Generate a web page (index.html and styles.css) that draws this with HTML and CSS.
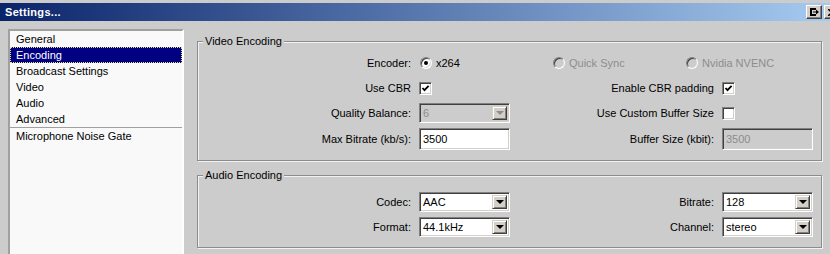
FILE: index.html
```html
<!DOCTYPE html>
<html lang="en">
<head>
  <meta charset="UTF-8" />
  <title>Settings...</title>
  <link rel="stylesheet" href="styles.css">
</head>
<body>
  <div class="window">
    <div class="titlebar">
      <span class="title">Settings...</span>
      <div class="tb-buttons">
        <span class="tb-btn">
          <svg width="9" height="8" viewBox="0 0 9 8">
            <path d="M0 0H6V2H2V6H6V8H0Z" fill="#000"/>
            <path d="M3 3.5H6V1.5L9 4L6 6.5V4.5H3Z" fill="#000"/>
          </svg>
        </span>
        <span class="tb-btn">
          <svg width="8" height="7" viewBox="0 0 8 7">
            <path d="M0 0L8 7M8 0L0 7" stroke="#000" stroke-width="1.6"/>
          </svg>
        </span>
      </div>
    </div>

    <div class="client">
      <ul class="pane-list">
        <li>General</li>
        <li class="selected">Encoding</li>
        <li>Broadcast Settings</li>
        <li>Video</li>
        <li>Audio</li>
        <li>Advanced</li>
        <li class="sep">Microphone Noise Gate</li>
      </ul>

      <div class="pane">
        <fieldset class="group">
          <legend>Video Encoding</legend>
          <div class="form video-form">
            <span class="lbl">Encoder:</span>
            <div class="encoders">
              <span class="opt"><span class="radio checked"></span>x264</span>
              <span class="opt disabled"><span class="radio"></span>Quick Sync</span>
              <span class="opt disabled"><span class="radio"></span>Nvidia NVENC</span>
            </div>

            <span class="lbl">Use CBR</span>
            <span class="check checked"></span>
            <span class="lbl">Enable CBR padding</span>
            <span class="check checked"></span>

            <span class="lbl">Quality Balance:</span>
            <div class="combo disabled"><span class="val">6</span><span class="drop"></span></div>
            <span class="lbl">Use Custom Buffer Size</span>
            <span class="check"></span>

            <span class="lbl">Max Bitrate (kb/s):</span>
            <div class="edit">3500</div>
            <span class="lbl">Buffer Size (kbit):</span>
            <div class="edit disabled">3500</div>
          </div>
        </fieldset>

        <fieldset class="group audio">
          <legend>Audio Encoding</legend>
          <div class="form audio-form">
            <span class="lbl">Codec:</span>
            <div class="combo"><span class="val">AAC</span><span class="drop"></span></div>
            <span class="lbl">Bitrate:</span>
            <div class="combo"><span class="val">128</span><span class="drop"></span></div>

            <span class="lbl">Format:</span>
            <div class="combo"><span class="val">44.1kHz</span><span class="drop"></span></div>
            <span class="lbl">Channel:</span>
            <div class="combo"><span class="val">stereo</span><span class="drop"></span></div>
          </div>
        </fieldset>
      </div>
    </div>
  </div>
</body>
</html>
```

FILE: styles.css
```css
html, body {
  margin: 0;
  overflow: hidden;
}
body {
  background: #cccccc;
  font-family: "Liberation Sans", Arial, sans-serif;
  font-size: 11px;
  color: #000;
  width: 830px;
  height: 254px;
}

/* title bar */
.titlebar {
  display: flex;
  align-items: center;
  height: 18px;
  margin-top: 3px;
  background: linear-gradient(to right, #0a246a, #a6caf0);
}
.title {
  padding-left: 5px;
  color: #fff;
  font-weight: bold;
  letter-spacing: 0.3px;
}
.tb-buttons {
  display: flex;
  gap: 2px;
  margin-left: auto;
  margin-right: -10px;
}
.tb-btn {
  display: flex;
  align-items: center;
  justify-content: center;
  width: 16px;
  height: 14px;
  box-sizing: border-box;
  background: #d4d0c8;
  border: 1px solid;
  border-color: #fff #404040 #404040 #fff;
  box-shadow: inset -1px -1px #808080;
}

/* client area */
.client {
  display: flex;
  gap: 13px;
  padding: 8px 8px 0 8px;
}

.pane-list {
  width: 176px;
  height: 225px;
  box-sizing: border-box;
  margin: 0;
  padding: 0;
  list-style: none;
  background: #f9f9f9;
  border: 2px solid;
  border-bottom: 0;
  border-color: #a0a0a0 #ffffff #ffffff #a0a0a0;
}
.pane-list li {
  height: 16px;
  line-height: 16px;
  padding-left: 6px;
  white-space: nowrap;
}
.pane-list li.selected {
  background: #000080;
  color: #fff;
  outline: 1px dotted #e8e880;
  outline-offset: -1px;
}
.pane-list li.sep {
  border-top: 1px solid #a0a0a0;
}

.pane {
  width: 625px;
}

/* group boxes */
.group {
  margin: 6px 0 0 0;
  padding: 0;
  min-inline-size: 0;
  border: 1px solid #8c8c8c;
  box-shadow: 1px 1px 0 #f2f2f2, inset 1px 1px 0 #f2f2f2;
}
.group.audio {
  margin-top: 8px;
}
.group legend {
  margin-left: 5px;
  padding: 0 2px;
  line-height: 13px;
  background: #cccccc;
}

.form {
  display: grid;
  grid-template-columns: 213px 91px 196px 91px;
  column-gap: 8px;
  row-gap: 5px;
  align-items: center;
}
.video-form {
  grid-template-rows: 20px 20px 20px 22px;
  padding: 5px 0 10px;
}
.audio-form {
  grid-template-rows: 20px 20px;
  padding: 10px 0 10px;
}
.lbl {
  text-align: right;
  white-space: nowrap;
}

/* radios */
.encoders {
  grid-column: 2 / 5;
  display: grid;
  grid-template-columns: 133px 133px auto;
}
.opt {
  display: flex;
  align-items: center;
  gap: 4px;
  padding-left: 1px;
}
.opt.disabled {
  color: #8d8d8d;
}
.radio {
  position: relative;
  width: 12px;
  height: 12px;
  box-sizing: border-box;
  border-radius: 50%;
  border: 1px solid;
  border-color: #808080 #ffffff #ffffff #808080;
  box-shadow: inset 1px 1px 0 #404040, inset -1px -1px 0 #d4d0c8;
  background: #fff;
}
.opt.disabled .radio {
  background: #cccccc;
}
.radio.checked::after {
  content: "";
  position: absolute;
  left: 3px;
  top: 3px;
  width: 4px;
  height: 4px;
  border-radius: 50%;
  background: #000;
}

/* checkboxes */
.check {
  width: 13px;
  height: 13px;
  box-sizing: border-box;
  border: 1px solid;
  border-color: #808080 #ffffff #ffffff #808080;
  box-shadow: inset 1px 1px 0 #404040, inset -1px -1px 0 #d4d0c8;
  background: #fff;
}
.check.checked {
  background: #fff url("data:image/svg+xml;utf8,<svg xmlns='http://www.w3.org/2000/svg' width='11' height='11'><path d='M2.5 5 L4.5 7.2 L8.6 2.8' fill='none' stroke='black' stroke-width='1.8'/></svg>") center / 11px 11px no-repeat;
}

/* combos and edits */
.combo, .edit {
  display: flex;
  align-items: center;
  height: 100%;
  box-sizing: border-box;
  border: 1px solid;
  border-color: #808080 #ffffff #ffffff #808080;
  box-shadow: inset 1px 1px 0 #404040, inset -1px -1px 0 #d4d0c8;
  background: #fff;
  padding: 2px;
}
.combo .val {
  flex: 1;
  padding-left: 1px;
}
.edit {
  padding-left: 3px;
}
.combo.disabled, .edit.disabled {
  background: #cccccc;
  color: #8d8d8d;
}
.drop {
  position: relative;
  width: 15px;
  height: 100%;
  box-sizing: border-box;
  background: #d4d0c8;
  border: 1px solid;
  border-color: #d4d0c8 #404040 #404040 #d4d0c8;
  box-shadow: inset 1px 1px 0 #fff, inset -1px -1px 0 #808080;
}
.drop::after {
  content: "";
  position: absolute;
  left: 3px;
  top: 50%;
  margin-top: -2px;
  border-left: 4px solid transparent;
  border-right: 4px solid transparent;
  border-top: 4px solid #000;
}
.combo.disabled .drop::after {
  border-top-color: #8d8d8d;
}
```
